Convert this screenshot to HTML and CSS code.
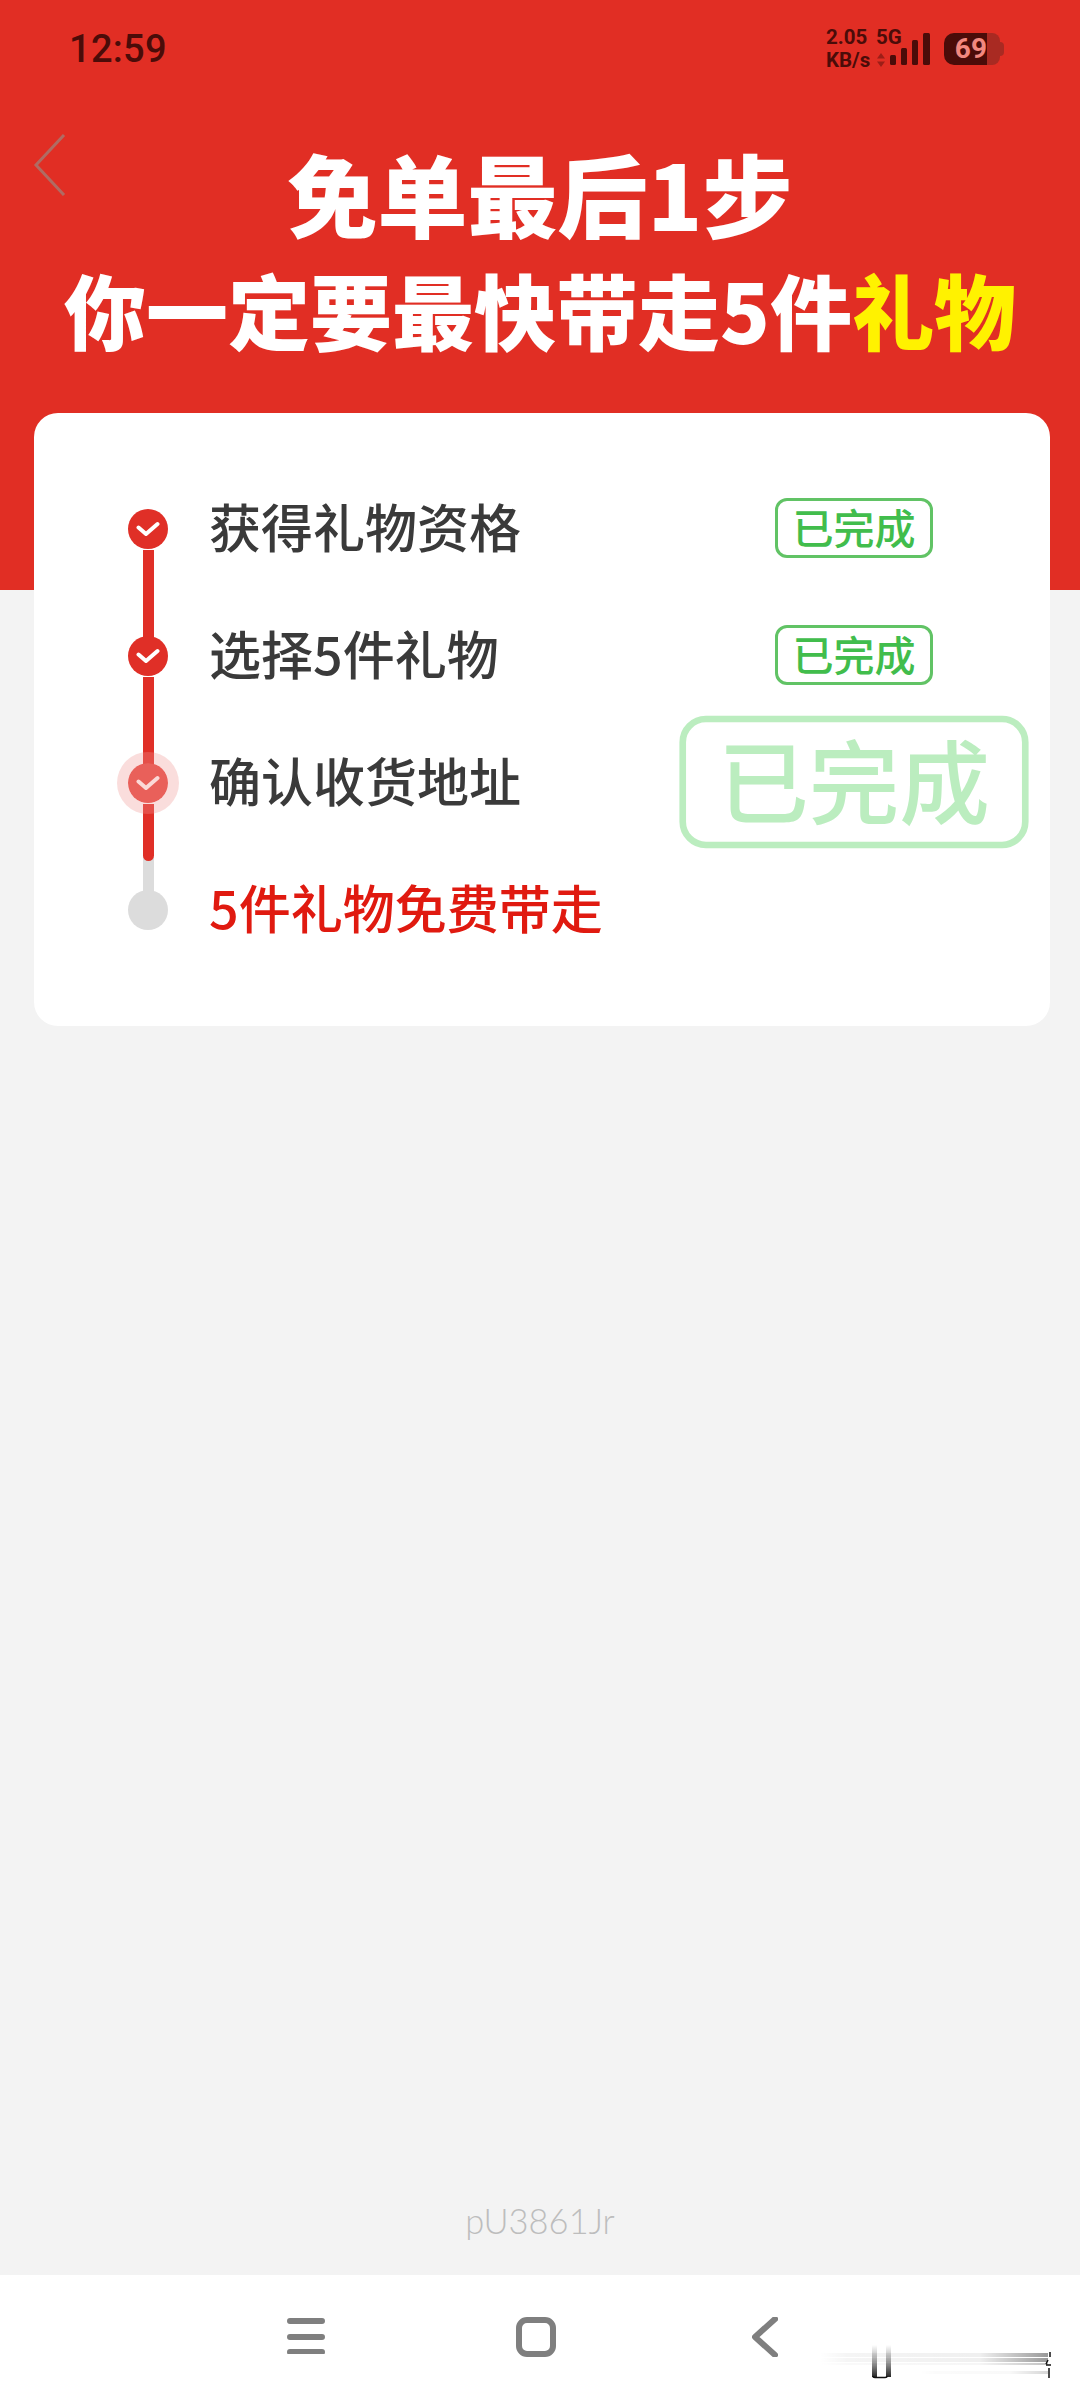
FILE: index.html
```html
<!DOCTYPE html>
<html lang="zh">
<head>
<meta charset="utf-8">
<title>免单最后1步</title>
<link rel="stylesheet" href="styles.css">
</head>
<body>
<div class="page">
  <header class="hero">
    <div class="status">
      <span class="time">12:59</span>
      <div class="status-right">
        <div class="speed"><span>2.05</span><span>KB/s</span></div>
        <div class="net">
          <span class="net-label">5G</span>
          <svg class="updown" viewBox="0 0 8 14" width="8" height="14"><path d="M4 0l4 5.500H0zM4 14l4-5.500H0z"/></svg>
        </div>
        <svg class="signal" viewBox="0 0 40 32" width="40" height="32"><rect x="0" y="22" width="6" height="10" rx="1.500"/><rect x="11" y="15" width="6" height="17" rx="1.500"/><rect x="22" y="7" width="6" height="25" rx="1.500"/><rect x="33" y="0" width="7" height="32" rx="1.500"/></svg>
        <div class="battery"><span class="battery-fill">69</span><span class="battery-rest"></span><span class="battery-nub"></span></div>
      </div>
    </div>
    <svg class="back" viewBox="0 0 33 62" width="33" height="62"><path d="M31 1 3 31l28 30"/></svg>
    <h1 class="title title-a">免单最后1步</h1>
    <h2 class="title title-b">你一定要最快带走5件<em>礼物</em></h2>
  </header>

  <main class="content">
    <section class="card">
      <div class="step">
        <span class="dot done rail-red"><svg class="tick" viewBox="0 0 24 16"><path d="M2.500 6.500 10 13 21.500 3"/></svg></span>
        <span class="label">获得礼物资格</span>
        <span class="badge">已完成</span>
      </div>
      <div class="step">
        <span class="dot done rail-red"><svg class="tick" viewBox="0 0 24 16"><path d="M2.500 6.500 10 13 21.500 3"/></svg></span>
        <span class="label">选择5件礼物</span>
        <span class="badge">已完成</span>
      </div>
      <div class="step">
        <span class="dot done active rail-part"><span class="halo"></span><svg class="tick" viewBox="0 0 24 16"><path d="M2.500 6.500 10 13 21.500 3"/></svg></span>
        <span class="label">确认收货地址</span>
        <span class="badge ghost">已完成</span>
      </div>
      <div class="step">
        <span class="dot todo"></span>
        <span class="label label-red">5件礼物免费带走</span>
      </div>
    </section>
    <p class="code">pU3861Jr</p>
  </main>

  <nav class="nav">
    <svg class="nav-menu" viewBox="0 0 38 38" width="38" height="38"><path d="M3 5h32M3 21h32M3 36h32"/></svg>
    <svg class="nav-home" viewBox="0 0 40 40" width="40" height="40"><rect x="3" y="3" width="34" height="34" rx="8"/></svg>
    <svg class="nav-back" viewBox="0 0 26 40" width="26" height="40"><path d="M23 2 3 20l20 18"/></svg>
    <svg class="smudge" viewBox="0 0 240 40" width="240" height="40">
      <defs>
        <linearGradient id="fadeV" x1="0" y1="0" x2="0" y2="1"><stop offset="0" stop-color="#000" stop-opacity="0"/><stop offset=".5" stop-color="#000" stop-opacity=".35"/><stop offset="1" stop-color="#000" stop-opacity=".85"/></linearGradient>
        <linearGradient id="fadeH" x1="0" y1="0" x2="1" y2="0"><stop offset="0" stop-color="#000" stop-opacity="0"/><stop offset=".12" stop-color="#000" stop-opacity=".04"/><stop offset=".7" stop-color="#000" stop-opacity=".06"/><stop offset="1" stop-color="#000" stop-opacity=".4"/></linearGradient>
      </defs>
      <rect x="0" y="10" width="228" height="4" fill="url(#fadeH)"/>
      <rect x="0" y="15" width="228" height="4" fill="url(#fadeH)"/>
      <rect x="0" y="20" width="228" height="2" fill="url(#fadeH)" opacity=".6"/>
      <rect x="100" y="28" width="128" height="3" fill="url(#fadeH)" opacity=".4"/>
      <rect x="52" y="2" width="5" height="32" fill="url(#fadeV)"/>
      <rect x="66" y="2" width="5" height="32" fill="url(#fadeV)"/>
      <path class="smudge-base" d="M53 33q0 1.500 2 1.500h10q2 0 2-1.500"/>
      <path class="smudge-end" d="M230 9v5M228 17l-2 4M226 22h5M229 25v10"/>
    </svg>
  </nav>
</div>
</body>
</html>
```

FILE: styles.css
```css
* { box-sizing: border-box; margin: 0; padding: 0; }

html, body { width: 1080px; height: 2400px; overflow: hidden; }

body {
  background: #f3f3f3;
  font-family: "Noto Sans CJK SC", "Noto Sans", sans-serif;
}

.page {
  width: 1080px;
  height: 2400px;
  display: flex;
  flex-direction: column;
}

/* ---------- header ---------- */
.hero {
  position: relative;
  flex: 0 0 590px;
  background: #e12e24;
  color: #fff;
  text-align: center;
}

.status {
  height: 100px;
  padding: 33px 0 0 69px;
  display: flex;
  justify-content: space-between;
  color: #4b0c09;
}

.time {
  font: 500 38px/32px Roboto, sans-serif;
  letter-spacing: .3px;
}

.status-right {
  display: flex;
  align-items: flex-start;
  padding-right: 76px;
  font: 700 20.500px/1 Roboto, sans-serif;
}

.speed {
  width: 50px;
  display: flex;
  flex-direction: column;
  gap: 2.500px;
  margin-top: -6px;
  text-align: left;
}

.net {
  width: 64px;
  display: flex;
  flex-direction: column;
  align-items: flex-start;
  margin-top: -6px;
  gap: 5px;
}

.updown { fill: #4b0c09; opacity: .45; margin-left: 1px; }

.signal { flex: none; fill: #4b0c09; margin-left: -50px; }

.battery {
  flex: none;
  width: 60px;
  height: 32px;
  margin-left: 14px;
  display: flex;
  align-items: center;
}

.battery-fill {
  width: 43px;
  height: 32px;
  background: #4b0c09;
  border-radius: 10px 0 0 10px;
  color: #f2887f;
  font: 700 28px/32px Roboto, sans-serif;
  text-align: right;
}

.battery-rest {
  width: 13px;
  height: 32px;
  background: #a92a22;
  border-radius: 0 8px 8px 0;
}

.battery-nub {
  width: 4px;
  height: 14px;
  background: #a92a22;
  border-radius: 0 4px 4px 0;
}

.back {
  position: absolute;
  left: 33px;
  top: 134px;
  fill: none;
  stroke: #b06b63;
  stroke-width: 3;
}

.title { font-weight: 900; line-height: 1; white-space: nowrap; }

.title-a { font-size: 90px; margin-top: 47px; }

.title-b { font-size: 82px; margin-top: 31px; }

.title-b em { color: #fff200; font-style: normal; }

/* ---------- card ---------- */
.content {
  flex: 1;
  position: relative;
  display: flex;
  flex-direction: column;
  align-items: flex-start;
}

.card {
  width: 1016px;
  margin: -177px 0 0 34px;
  padding: 52px 117px 53px 94px;
  background: #fff;
  border-radius: 24px;
  position: relative;
}

.step {
  height: 127px;
  display: flex;
  align-items: center;
}

.dot {
  position: relative;
  flex: none;
  width: 40px;
  height: 40px;
  border-radius: 50%;
  display: flex;
  align-items: center;
  justify-content: center;
}

.done { background: #e02f27; }

.todo { background: #dcdcdc; }

.rail-red::after,
.rail-part::after {
  content: "";
  position: absolute;
  left: 15px;
  top: 41px;
  width: 11px;
  height: 87px;
  background: #e02f27;
}

.rail-part::before {
  content: "";
  position: absolute;
  left: 15px;
  top: 41px;
  width: 11px;
  height: 87px;
  background: #dcdcdc;
}

.rail-part::after {
  height: 57px;
  border-radius: 0 0 6px 6px;
}

.active { background: #e9605a; }

.halo {
  position: absolute;
  inset: 0;
  z-index: 1;
  border-radius: 50%;
  box-shadow: 0 0 0 11px rgba(240, 150, 145, .32);
}

.tick {
  position: relative;
  z-index: 2;
  width: 24px;
  height: 16px;
  fill: none;
  stroke: #fff;
  stroke-width: 4;
  stroke-linecap: round;
  stroke-linejoin: round;
}

.active .tick { stroke: #fbd9d7; }

.label {
  flex: 1;
  margin-left: 41px;
  padding-bottom: 6px;
  font-size: 52px;
  font-weight: 500;
  line-height: 1;
  color: #3a3a3a;
}

.label-red { color: #e01a10; }

.badge {
  flex: none;
  width: 158px;
  height: 60px;
  margin-bottom: 2px;
  border: 3px solid #61c365;
  border-radius: 12px;
  color: #41bd4c;
  font-size: 41px;
  font-weight: 500;
  line-height: 50px;
  text-align: center;
}

.ghost {
  border-color: #4fd05a;
  color: #4fd05a;
  transform: scale(2.210);
  opacity: .38;
}

.code {
  position: absolute;
  left: 0;
  right: 0;
  top: 1611px;
  text-align: center;
  font: 300 34.500px/40px Lato, sans-serif;
  color: #bdbdbd;
}

/* ---------- bottom nav ---------- */
.nav {
  position: relative;
  flex: 0 0 125px;
  background: #fff;
}

.nav svg { position: absolute; fill: none; }

.nav-menu {
  left: 287px;
  top: 41px;
  stroke: #7f7f7f;
  stroke-width: 6;
  stroke-linecap: round;
}

.nav-home {
  left: 516px;
  top: 42px;
  stroke: #7f7f7f;
  stroke-width: 6;
}

.nav-back {
  left: 752px;
  top: 42px;
  stroke: #7f7f7f;
  stroke-width: 6;
  stroke-linecap: round;
  stroke-linejoin: round;
}

.smudge { left: 820px; top: 68px; }

.smudge-base { stroke: #111; stroke-width: 1.500; }

.smudge-end { stroke: #111; stroke-width: 1.500; }
```
